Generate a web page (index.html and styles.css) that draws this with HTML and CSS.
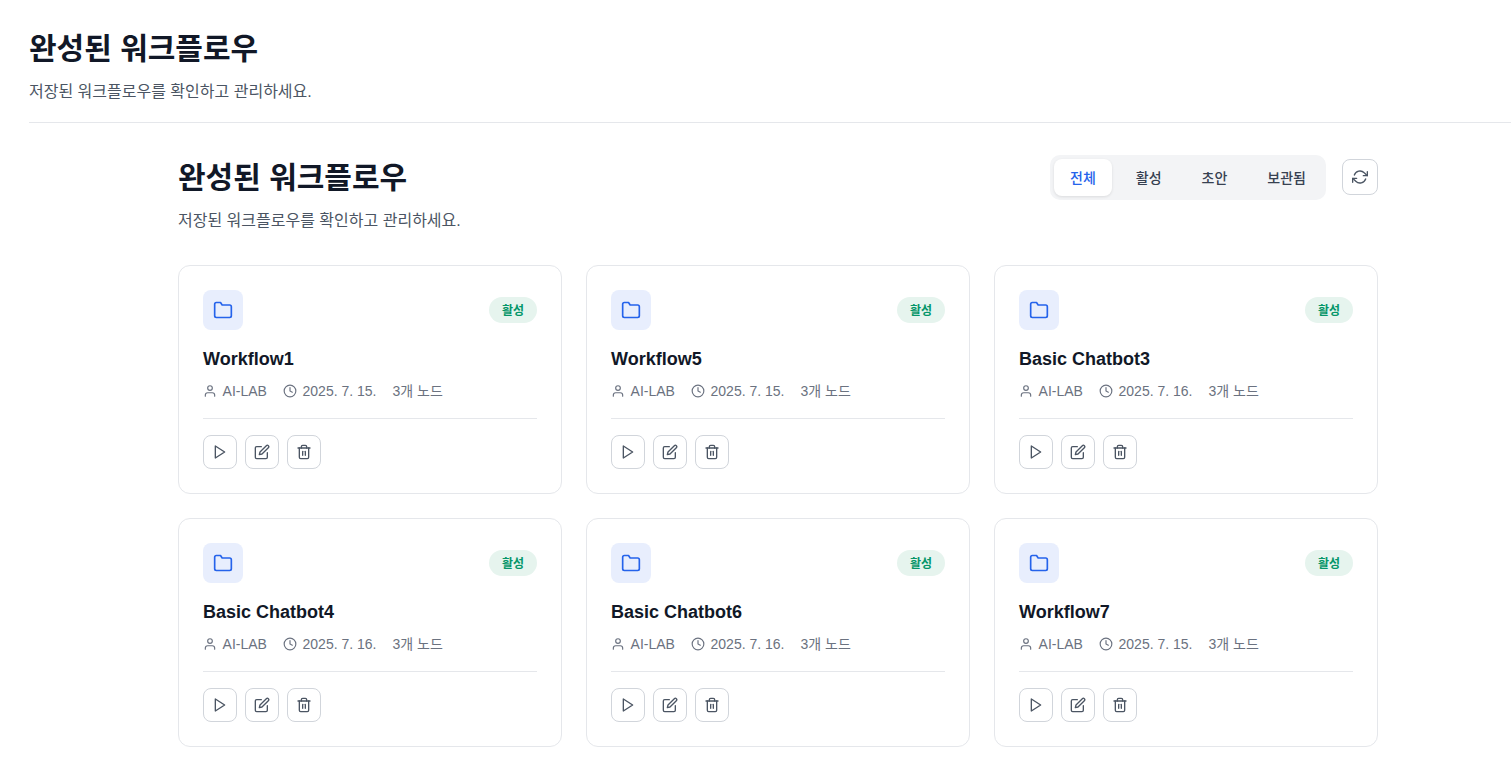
FILE: index.html
```html
<!DOCTYPE html>
<html lang="ko">
<head>
  <meta charset="UTF-8" />
  <meta name="viewport" content="width=device-width, initial-scale=1.0" />
  <title>완성된 워크플로우</title>
  <link rel="stylesheet" href="styles.css">
</head>
<body>
  <svg class="sprite" xmlns="http://www.w3.org/2000/svg">
    <symbol id="i-folder" viewBox="0 0 24 24"><path d="M22 19a2 2 0 0 1-2 2H4a2 2 0 0 1-2-2V5a2 2 0 0 1 2-2h5l2 3h9a2 2 0 0 1 2 2z"/></symbol>
    <symbol id="i-user" viewBox="0 0 24 24"><path d="M20 21v-2a4 4 0 0 0-4-4H8a4 4 0 0 0-4 4v2"/><circle cx="12" cy="7" r="4"/></symbol>
    <symbol id="i-clock" viewBox="0 0 24 24"><circle cx="12" cy="12" r="10"/><polyline points="12 6 12 12 16 14"/></symbol>
    <symbol id="i-play" viewBox="0 0 24 24"><polygon points="5 3 19 12 5 21 5 3"/></symbol>
    <symbol id="i-edit" viewBox="0 0 24 24"><path d="M11 4H4a2 2 0 0 0-2 2v14a2 2 0 0 0 2 2h14a2 2 0 0 0 2-2v-7"/><path d="M18.5 2.5a2.121 2.121 0 0 1 3 3L12 15l-4 1 1-4 9.5-9.5z"/></symbol>
    <symbol id="i-trash" viewBox="0 0 24 24"><polyline points="3 6 5 6 21 6"/><path d="M19 6v14a2 2 0 0 1-2 2H7a2 2 0 0 1-2-2V6m3 0V4a2 2 0 0 1 2-2h4a2 2 0 0 1 2 2v2"/><line x1="10" y1="11" x2="10" y2="17"/><line x1="14" y1="11" x2="14" y2="17"/></symbol>
    <symbol id="i-refresh" viewBox="0 0 24 24"><polyline points="23 4 23 10 17 10"/><polyline points="1 20 1 14 7 14"/><path d="M3.51 9a9 9 0 0 1 14.85-3.36L23 10M1 14l4.64 4.36A9 9 0 0 0 20.49 15"/></symbol>
  </svg>

  <div class="page">
    <header class="page-header">
      <h1>완성된 워크플로우</h1>
      <p>저장된 워크플로우를 확인하고 관리하세요.</p>
    </header>

    <main class="panel">
      <div class="panel-top">
        <div class="panel-title">
          <h1>완성된 워크플로우</h1>
          <p>저장된 워크플로우를 확인하고 관리하세요.</p>
        </div>
        <div class="panel-tools">
          <div class="tabs">
            <button class="tab active">전체</button>
            <button class="tab">활성</button>
            <button class="tab">초안</button>
            <button class="tab">보관됨</button>
          </div>
          <button class="refresh"><svg class="icon-btn"><use href="#i-refresh"/></svg></button>
        </div>
      </div>

      <div class="grid">
        <article class="card">
          <div class="card-top">
            <div class="card-icon"><svg class="icon"><use href="#i-folder"/></svg></div>
            <span class="badge">활성</span>
          </div>
          <h3>Workflow1</h3>
          <div class="meta">
            <span class="meta-item"><svg class="icon-sm"><use href="#i-user"/></svg>AI-LAB</span>
            <span class="meta-item"><svg class="icon-sm"><use href="#i-clock"/></svg>2025. 7. 15.</span>
            <span class="meta-item">3개 노드</span>
          </div>
          <div class="actions">
            <button class="action"><svg class="icon-btn"><use href="#i-play"/></svg></button>
            <button class="action"><svg class="icon-btn"><use href="#i-edit"/></svg></button>
            <button class="action"><svg class="icon-btn"><use href="#i-trash"/></svg></button>
          </div>
        </article>

        <article class="card">
          <div class="card-top">
            <div class="card-icon"><svg class="icon"><use href="#i-folder"/></svg></div>
            <span class="badge">활성</span>
          </div>
          <h3>Workflow5</h3>
          <div class="meta">
            <span class="meta-item"><svg class="icon-sm"><use href="#i-user"/></svg>AI-LAB</span>
            <span class="meta-item"><svg class="icon-sm"><use href="#i-clock"/></svg>2025. 7. 15.</span>
            <span class="meta-item">3개 노드</span>
          </div>
          <div class="actions">
            <button class="action"><svg class="icon-btn"><use href="#i-play"/></svg></button>
            <button class="action"><svg class="icon-btn"><use href="#i-edit"/></svg></button>
            <button class="action"><svg class="icon-btn"><use href="#i-trash"/></svg></button>
          </div>
        </article>

        <article class="card">
          <div class="card-top">
            <div class="card-icon"><svg class="icon"><use href="#i-folder"/></svg></div>
            <span class="badge">활성</span>
          </div>
          <h3>Basic Chatbot3</h3>
          <div class="meta">
            <span class="meta-item"><svg class="icon-sm"><use href="#i-user"/></svg>AI-LAB</span>
            <span class="meta-item"><svg class="icon-sm"><use href="#i-clock"/></svg>2025. 7. 16.</span>
            <span class="meta-item">3개 노드</span>
          </div>
          <div class="actions">
            <button class="action"><svg class="icon-btn"><use href="#i-play"/></svg></button>
            <button class="action"><svg class="icon-btn"><use href="#i-edit"/></svg></button>
            <button class="action"><svg class="icon-btn"><use href="#i-trash"/></svg></button>
          </div>
        </article>

        <article class="card">
          <div class="card-top">
            <div class="card-icon"><svg class="icon"><use href="#i-folder"/></svg></div>
            <span class="badge">활성</span>
          </div>
          <h3>Basic Chatbot4</h3>
          <div class="meta">
            <span class="meta-item"><svg class="icon-sm"><use href="#i-user"/></svg>AI-LAB</span>
            <span class="meta-item"><svg class="icon-sm"><use href="#i-clock"/></svg>2025. 7. 16.</span>
            <span class="meta-item">3개 노드</span>
          </div>
          <div class="actions">
            <button class="action"><svg class="icon-btn"><use href="#i-play"/></svg></button>
            <button class="action"><svg class="icon-btn"><use href="#i-edit"/></svg></button>
            <button class="action"><svg class="icon-btn"><use href="#i-trash"/></svg></button>
          </div>
        </article>

        <article class="card">
          <div class="card-top">
            <div class="card-icon"><svg class="icon"><use href="#i-folder"/></svg></div>
            <span class="badge">활성</span>
          </div>
          <h3>Basic Chatbot6</h3>
          <div class="meta">
            <span class="meta-item"><svg class="icon-sm"><use href="#i-user"/></svg>AI-LAB</span>
            <span class="meta-item"><svg class="icon-sm"><use href="#i-clock"/></svg>2025. 7. 16.</span>
            <span class="meta-item">3개 노드</span>
          </div>
          <div class="actions">
            <button class="action"><svg class="icon-btn"><use href="#i-play"/></svg></button>
            <button class="action"><svg class="icon-btn"><use href="#i-edit"/></svg></button>
            <button class="action"><svg class="icon-btn"><use href="#i-trash"/></svg></button>
          </div>
        </article>

        <article class="card">
          <div class="card-top">
            <div class="card-icon"><svg class="icon"><use href="#i-folder"/></svg></div>
            <span class="badge">활성</span>
          </div>
          <h3>Workflow7</h3>
          <div class="meta">
            <span class="meta-item"><svg class="icon-sm"><use href="#i-user"/></svg>AI-LAB</span>
            <span class="meta-item"><svg class="icon-sm"><use href="#i-clock"/></svg>2025. 7. 15.</span>
            <span class="meta-item">3개 노드</span>
          </div>
          <div class="actions">
            <button class="action"><svg class="icon-btn"><use href="#i-play"/></svg></button>
            <button class="action"><svg class="icon-btn"><use href="#i-edit"/></svg></button>
            <button class="action"><svg class="icon-btn"><use href="#i-trash"/></svg></button>
          </div>
        </article>
      </div>
    </main>
  </div>
</body>
</html>
```

FILE: styles.css
```css
body {
  margin: 0;
  background: #fff;
  color: #111827;
  font-family: "Liberation Sans", "Noto Sans CJK KR", sans-serif;
  overflow: hidden;
}
.sprite {
  display: none;
}
.page {
  padding-left: 29px;
}
.page-header {
  height: 123px;
  padding-top: 31px;
  box-sizing: border-box;
  border-bottom: 1px solid #e5e7eb;
}
h1 {
  margin: 0;
  font-size: 30px;
  line-height: 36px;
  font-weight: 700;
  color: #111827;
}
.page-header p,
.panel-title p {
  margin: 13px 0 0;
  font-size: 16px;
  line-height: 24px;
  color: #4b5563;
}
.panel {
  width: 1200px;
  margin-left: 149px;
}
.panel-top {
  display: flex;
  justify-content: space-between;
  align-items: flex-start;
  padding-top: 32px;
}
.panel-title {
  margin-top: 5px;
}
.panel-tools {
  display: flex;
  align-items: flex-start;
  gap: 16px;
}
.tabs {
  display: flex;
  gap: 8px;
  padding: 4px;
  background: #f3f4f6;
  border-radius: 10px;
}
.tab {
  height: 37px;
  padding: 0 16px 2px;
  border: none;
  border-radius: 8px;
  background: none;
  font-family: inherit;
  font-size: 14px;
  font-weight: 500;
  color: #374151;
}
.tab.active {
  background: #fff;
  color: #2563eb;
  box-shadow: 0 1px 3px rgba(0,0,0,0.1);
}
.refresh {
  display: flex;
  align-items: center;
  justify-content: center;
  width: 36px;
  height: 36px;
  margin-top: 4px;
  padding: 0;
  background: #fff;
  border: 1px solid #d1d5db;
  border-radius: 8px;
  color: #4b5563;
}
.icon,
.icon-sm,
.icon-btn {
  fill: none;
  stroke: currentColor;
  stroke-width: 2;
  stroke-linecap: round;
  stroke-linejoin: round;
}
.icon {
  width: 20px;
  height: 20px;
}
.icon-sm {
  width: 14px;
  height: 14px;
}
.icon-btn {
  width: 16px;
  height: 16px;
}
.grid {
  display: grid;
  grid-template-columns: repeat(3, 1fr);
  gap: 24px;
  margin-top: 32px;
}
.card {
  height: 229px;
  box-sizing: border-box;
  padding: 24px;
  background: #fff;
  border: 1px solid #e5e7eb;
  border-radius: 12px;
}
.card-top {
  display: flex;
  justify-content: space-between;
  align-items: center;
}
.card-icon {
  display: flex;
  align-items: center;
  justify-content: center;
  width: 40px;
  height: 40px;
  background: #e8eefd;
  border-radius: 8px;
  color: #2563eb;
}
.badge {
  display: flex;
  align-items: center;
  justify-content: center;
  width: 48px;
  height: 26px;
  padding-bottom: 2px;
  box-sizing: border-box;
  background: #e6f4ee;
  border-radius: 13px;
  font-size: 12px;
  font-weight: 700;
  color: #059669;
}
h3 {
  margin: 17px 0 0;
  font-size: 18px;
  line-height: 24px;
  font-weight: 700;
  color: #111827;
}
.meta {
  display: flex;
  gap: 16px;
  margin-top: 10px;
  font-size: 14px;
  line-height: 20px;
  color: #6b7280;
}
.meta-item {
  display: flex;
  align-items: center;
  gap: 5.6px;
}
.actions {
  display: flex;
  gap: 8px;
  margin-top: 17px;
  padding-top: 16px;
  border-top: 1px solid #e5e7eb;
}
.action {
  display: flex;
  align-items: center;
  justify-content: center;
  width: 34px;
  height: 34px;
  padding: 0;
  background: #fff;
  border: 1px solid #d1d5db;
  border-radius: 8px;
  color: #4b5563;
}
```
